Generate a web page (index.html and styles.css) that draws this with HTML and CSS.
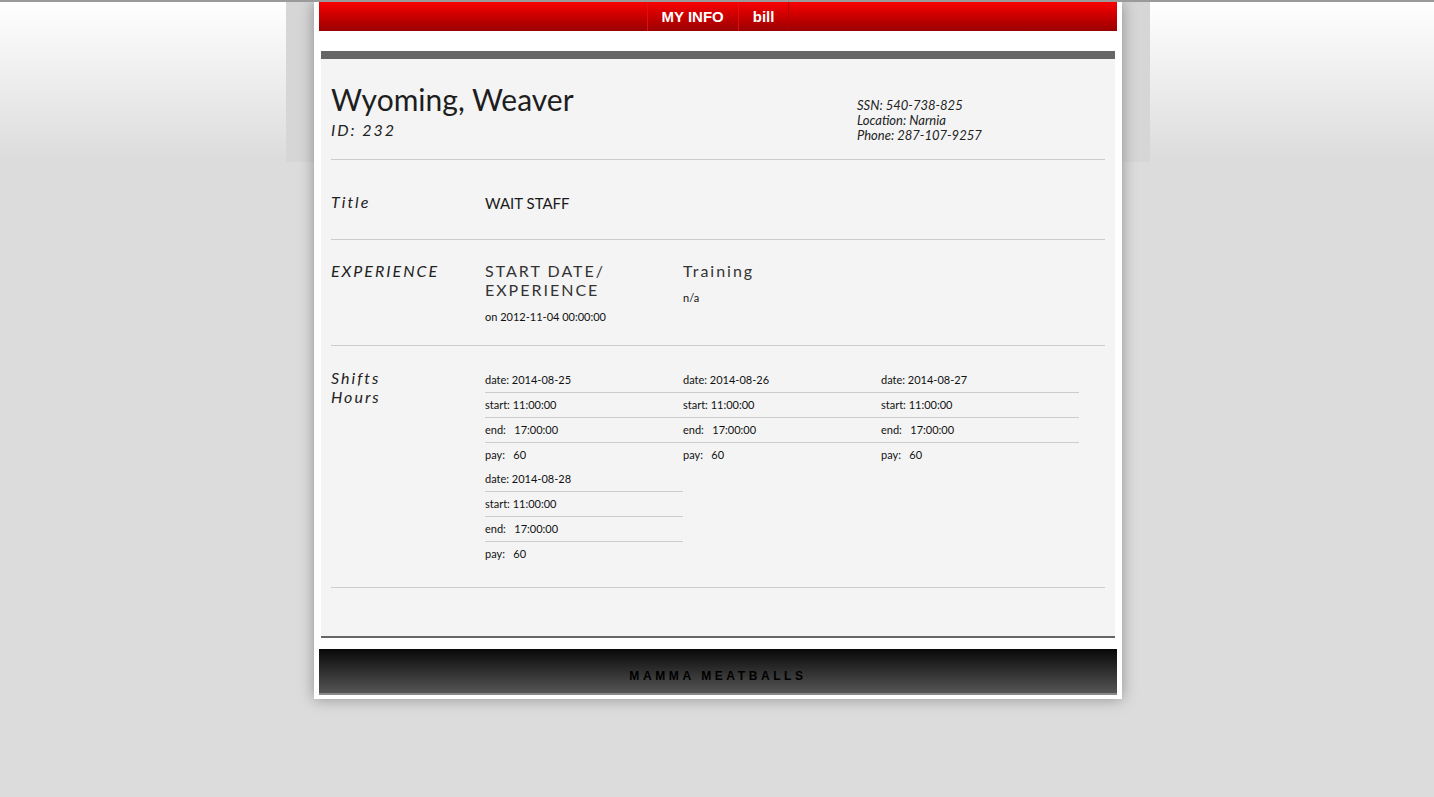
FILE: index.html
```html
<!DOCTYPE html>
<html>
<head>
<meta charset="utf-8">
<title>My Info</title>
<link rel="stylesheet" href="styles.css">
</head>
<body>
<div class="wrap">
  <div class="page">
    <nav class="nav">
      <a class="nav-item">MY INFO</a>
      <a class="nav-item">bill</a>
    </nav>
    <main class="content">
      <section class="head">
        <div class="who">
          <h1 class="name">Wyoming, Weaver</h1>
          <div class="id">ID: 232</div>
        </div>
        <div class="contact">
          <div>SSN: 540-738-825</div>
          <div>Location: Narnia</div>
          <div>Phone: 287-107-9257</div>
        </div>
      </section>
      <section class="row row-title">
        <div class="label">Title</div>
        <div class="value">WAIT STAFF</div>
      </section>
      <section class="row row-exp">
        <div class="label">EXPERIENCE</div>
        <div class="col">
          <div class="col-head">START DATE/<br>EXPERIENCE</div>
          <div class="small">on 2012-11-04 00:00:00</div>
        </div>
        <div class="col">
          <div class="col-head">Training</div>
          <div class="small">n/a</div>
        </div>
      </section>
      <section class="row row-shifts">
        <div class="label">Shifts<br>Hours</div>
        <div class="shifts">
          <div class="shift">
            <div class="line">date: 2014-08-25</div>
            <div class="line">start: 11:00:00</div>
            <div class="line">end: &nbsp; 17:00:00</div>
            <div class="line">pay: &nbsp; 60</div>
          </div>
          <div class="shift">
            <div class="line">date: 2014-08-26</div>
            <div class="line">start: 11:00:00</div>
            <div class="line">end: &nbsp; 17:00:00</div>
            <div class="line">pay: &nbsp; 60</div>
          </div>
          <div class="shift">
            <div class="line">date: 2014-08-27</div>
            <div class="line">start: 11:00:00</div>
            <div class="line">end: &nbsp; 17:00:00</div>
            <div class="line">pay: &nbsp; 60</div>
          </div>
          <div class="shift">
            <div class="line">date: 2014-08-28</div>
            <div class="line">start: 11:00:00</div>
            <div class="line">end: &nbsp; 17:00:00</div>
            <div class="line">pay: &nbsp; 60</div>
          </div>
        </div>
      </section>
    </main>
    <footer class="footer">MAMMA MEATBALLS</footer>
  </div>
</div>
</body>
</html>
```

FILE: styles.css
```css
html, body {
  margin: 0;
  padding: 0;
}
body {
  min-height: 797px;
  box-sizing: border-box;
  border-top: 2px solid #9a9a9a;
  background: #dcdcdc linear-gradient(#ffffff 0px, #dcdcdc 160px) no-repeat;
  background-size: 100% 160px;
  font-family: Lato, "Liberation Sans", sans-serif;
  color: #222;
}
.wrap {
  width: 864px;
  margin-left: calc(50% - 431px);
  background: linear-gradient(#d6d6d6, #d6d6d6) no-repeat;
  background-size: 100% 160px;
  display: flex;
  justify-content: center;
}
.page {
  width: 798px;
  padding: 0 5px 4px;
  background: #fff;
  box-shadow: 0 0 14px rgba(0, 0, 0, 0.35);
}
.nav {
  height: 29px;
  background: linear-gradient(#f80000, #9a0000);
  display: flex;
  justify-content: center;
  align-items: stretch;
}
.nav-item {
  font-family: "Liberation Sans", Arial, sans-serif;
  font-weight: bold;
  font-size: 15px;
  color: #fff;
  padding: 0 14px;
  display: flex;
  align-items: center;
  border-left: 1px solid #e01010;
}
.nav-item:last-child {
  border-right: 1px solid #b00000;
}
.content {
  margin: 20px 2px 0;
  background: #f4f4f4;
  border-top: 8px solid #666;
  border-bottom: 2px solid #666;
  padding: 0 10px 48px;
}
.head {
  display: flex;
  justify-content: space-between;
  align-items: flex-start;
  padding: 22px 0 16px;
  border-bottom: 1px solid #ccc;
}
.name {
  margin: 0;
  font-weight: normal;
  font-size: 30px;
  line-height: 36px;
  color: #1e1e1e;
}
.id {
  font-style: italic;
  font-size: 16px;
  line-height: 19px;
  letter-spacing: 2px;
  margin-top: 3px;
}
.contact {
  width: 248px;
  margin-top: 17px;
  font-style: italic;
  font-size: 13px;
  line-height: 15px;
}
.row {
  display: flex;
  border-bottom: 1px solid #ccc;
}
.label {
  width: 154px;
  flex: none;
  font-style: italic;
  font-size: 16px;
  line-height: 19px;
  letter-spacing: 2px;
  color: #222;
}
.row-title {
  padding: 32px 0 25px;
}
.value {
  font-size: 15px;
  line-height: 21px;
  color: #1a1a1a;
  padding-top: 1px;
}
.row-exp {
  padding: 21px 0 20px;
}
.col {
  width: 198px;
}
.col-head {
  font-size: 16px;
  line-height: 19px;
  letter-spacing: 2px;
  color: #333;
}
.small {
  font-size: 11px;
  line-height: 16px;
  margin-top: 10px;
  color: #111;
}
.row-shifts {
  padding: 22px 0 21px;
}
.shifts {
  width: 594px;
  display: flex;
  flex-wrap: wrap;
}
.shift {
  width: 198px;
}
.line {
  font-size: 11px;
  height: 24px;
  line-height: 24px;
  border-bottom: 1px solid #ccc;
  color: #111;
}
.line:last-child {
  border-bottom: 0;
}
.footer {
  margin-top: 11px;
  height: 46px;
  box-sizing: border-box;
  padding-top: 20px;
  background: linear-gradient(#080808, #555);
  border-bottom: 2px solid #888;
  text-align: center;
  font-family: "Liberation Sans", Arial, sans-serif;
  font-weight: bold;
  font-size: 12px;
  letter-spacing: 3.6px;
  color: #000;
}
```
